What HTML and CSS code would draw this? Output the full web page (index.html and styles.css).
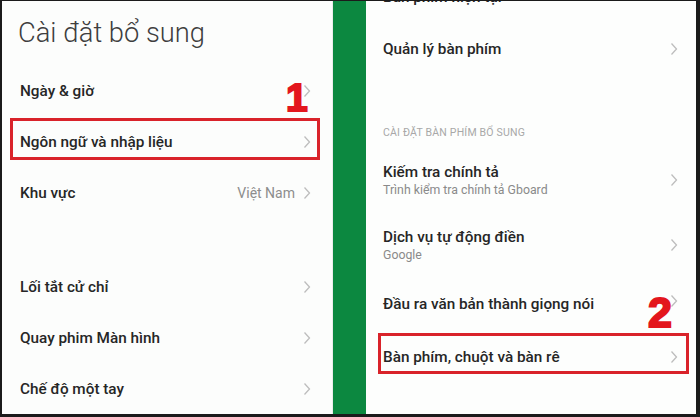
FILE: index.html
```html
<!DOCTYPE html>
<html lang="vi">
<head>
<meta charset="utf-8">
<link rel="stylesheet" href="styles.css">
</head>
<body>
<div class="frame">
  <section class="panel left">
    <h1 class="title">Cài đặt bổ sung</h1>
    <div class="row"><span class="label">Ngày &amp; giờ</span><span class="chev"><svg width="8" height="14" viewBox="0 0 8 14"><polyline points="1.5,1.5 6.5,7 1.5,12.5"/></svg></span></div>
    <div class="row"><span class="label">Ngôn ngữ và nhập liệu</span><span class="chev"><svg width="8" height="14" viewBox="0 0 8 14"><polyline points="1.5,1.5 6.5,7 1.5,12.5"/></svg></span></div>
    <div class="row"><span class="label">Khu vực</span><span class="value">Việt Nam</span><span class="chev"><svg width="8" height="14" viewBox="0 0 8 14"><polyline points="1.5,1.5 6.5,7 1.5,12.5"/></svg></span></div>
    <div class="spacer"></div>
    <div class="row"><span class="label">Lối tắt cử chỉ</span><span class="chev"><svg width="8" height="14" viewBox="0 0 8 14"><polyline points="1.5,1.5 6.5,7 1.5,12.5"/></svg></span></div>
    <div class="row"><span class="label">Quay phim Màn hình</span><span class="chev"><svg width="8" height="14" viewBox="0 0 8 14"><polyline points="1.5,1.5 6.5,7 1.5,12.5"/></svg></span></div>
    <div class="row"><span class="label">Chế độ một tay</span><span class="chev"><svg width="8" height="14" viewBox="0 0 8 14"><polyline points="1.5,1.5 6.5,7 1.5,12.5"/></svg></span></div>
    <div class="mark box1"></div>
    <div class="num num1">1</div>
  </section>
  <div class="green"></div>
  <section class="panel right">
    <div class="row cut"><span class="label">Bàn phím hiện tại</span></div>
    <div class="row"><span class="label">Quản lý bàn phím</span><span class="chev"><svg width="8" height="14" viewBox="0 0 8 14"><polyline points="1.5,1.5 6.5,7 1.5,12.5"/></svg></span></div>
    <div class="header">CÀI ĐẶT BÀN PHÍM BỔ SUNG</div>
    <div class="row two r1"><div class="texts"><span class="label">Kiếm tra chính tả</span><span class="sub">Trình kiểm tra chính tả Gboard</span></div><span class="chev"><svg width="8" height="14" viewBox="0 0 8 14"><polyline points="1.5,1.5 6.5,7 1.5,12.5"/></svg></span></div>
    <div class="row two r2"><div class="texts"><span class="label">Dịch vụ tự động điền</span><span class="sub">Google</span></div><span class="chev"><svg width="8" height="14" viewBox="0 0 8 14"><polyline points="1.5,1.5 6.5,7 1.5,12.5"/></svg></span></div>
    <div class="row r3"><span class="label">Đầu ra văn bản thành giọng nói</span><span class="chev up"><svg width="8" height="14" viewBox="0 0 8 14"><polyline points="1.5,1.5 6.5,7 1.5,12.5"/></svg></span></div>
    <div class="row"><span class="label">Bàn phím, chuột và bàn rê</span><span class="chev"><svg width="8" height="14" viewBox="0 0 8 14"><polyline points="1.5,1.5 6.5,7 1.5,12.5"/></svg></span></div>
    <div class="mark box2"></div>
    <div class="num num2">2</div>
  </section>
</div>
</body>
</html>
```
FILE: styles.css
```css
html, body {
  margin: 0;
  padding: 0;
  background: #1b1b1b;
}
.frame {
  width: 700px;
  height: 417px;
  box-sizing: border-box;
  padding: 1px 4px 3px 2px;
  display: flex;
  background: #1b1b1b;
  font-family: Roboto, "Noto Sans", sans-serif;
  overflow: hidden;
}
.panel {
  position: relative;
  height: 413px;
  overflow: hidden;
  display: flex;
  flex-direction: column;
  box-sizing: border-box;
}
.left {
  width: 331px;
  background: #fcfdfc;
  padding: 0 21px 0 18px;
  border-right: 1px solid #ececec;
}
.green {
  width: 33px;
  background: #0c8840;
  height: 413px;
}
.right {
  width: 330px;
  background: #fdfefd;
  padding: 0 18px 0 17px;
}
.title {
  margin: 0 0 0 -2px;
  height: 65px;
  box-sizing: border-box;
  padding-top: 15px;
  font-weight: 300;
  font-size: 27.3px;
  line-height: 34px;
  color: #3e3e3e;
  white-space: nowrap;
}
.row {
  height: 51px;
  flex: none;
  display: flex;
  align-items: center;
}
.label {
  font-size: 15.3px;
  font-weight: 500;
  color: #262626;
  line-height: 20px;
  white-space: nowrap;
}
.value {
  margin-left: auto;
  margin-right: 8px;
  font-size: 14px;
  color: #8d8d8d;
}
.chev {
  margin-left: auto;
  width: 8px;
  height: 14px;
  display: flex;
}
.value + .chev { margin-left: 0; }
.chev svg polyline {
  fill: none;
  stroke: #bdbdbd;
  stroke-width: 1.3;
}
.chev.up { margin-top: -6px; }
.spacer {
  height: 42.5px;
  flex: none;
}
.cut {
  height: 52px;
  margin-top: -30px;
}
.right .row { height: 52px; }
.header {
  flex: none;
  height: 71px;
  box-sizing: border-box;
  padding-top: 51px;
  font-size: 10.5px;
  color: #a8a8a8;
  letter-spacing: 0.2px;
  white-space: nowrap;
}
.right .row.r1 { height: 67px; }
.right .row.r2 { height: 64px; }
.right .row.r3 { height: 54px; }
.texts {
  display: flex;
  flex-direction: column;
}
.sub {
  font-size: 12.3px;
  color: #8a8a8a;
  line-height: 16px;
  white-space: nowrap;
}
.mark {
  position: absolute;
  border: 3px solid #d9232a;
  box-sizing: border-box;
}
.box1 {
  left: 8px;
  top: 117px;
  width: 310px;
  height: 42px;
}
.box2 {
  left: 12px;
  top: 332px;
  width: 311px;
  height: 41px;
}
.num {
  position: absolute;
  font-family: "Liberation Sans", Arial, sans-serif;
  font-weight: 700;
  color: #e3161d;
  line-height: 1;
  -webkit-text-stroke: 2px #e3161d;
}
.num1 {
  font-size: 39px;
  left: 284px;
  top: 77px;
}
.num2 {
  font-size: 43px;
  left: 282px;
  top: 290px;
}
```
